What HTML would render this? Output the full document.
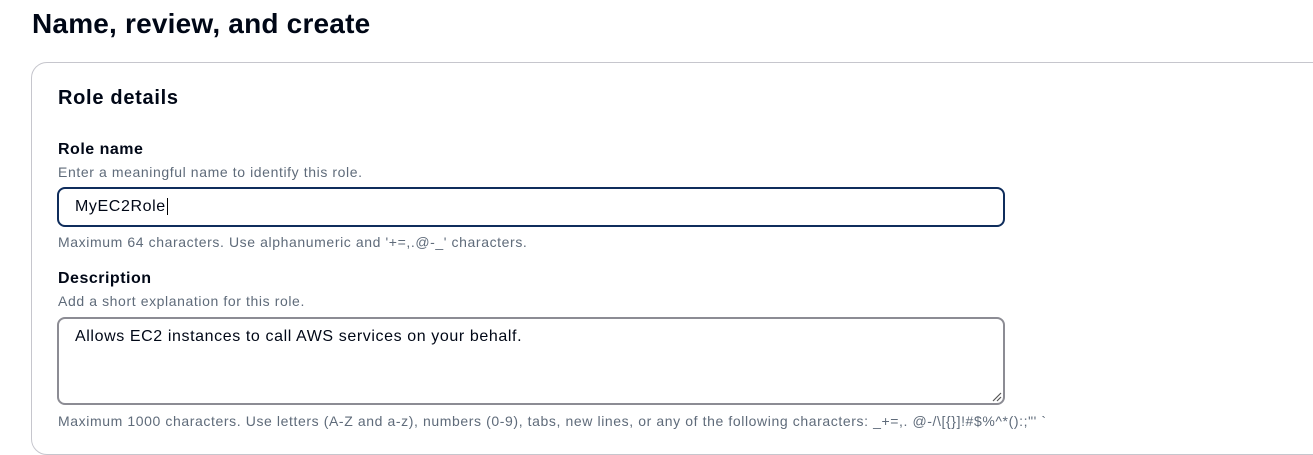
<!DOCTYPE html>
<html><head><style>
body{margin:0;background:#fff;font-family:"Liberation Sans",Arial,sans-serif;color:#000716;width:1313px;height:455px;overflow:hidden;position:relative}
.a{position:absolute;white-space:nowrap}
h1{position:absolute;left:32px;top:8px;margin:0;font-size:28px;font-weight:bold;letter-spacing:0.2px}
.card{position:absolute;left:31px;top:62px;width:1320px;height:391px;border:1px solid #c6c6cd;border-radius:16px}
.lbl{font-size:16px;font-weight:bold;letter-spacing:0.5px}
.hint{font-size:14px;color:#5f6b7a;letter-spacing:0.6px}
.inp{position:absolute;left:57px;border-radius:8px;box-sizing:border-box;font-size:16px;padding-left:16px;letter-spacing:0.6px}
</style></head><body>
<h1>Name, review, and create</h1>
<div class="card"></div>
<div class="a" style="left:58px;top:87px;font-size:20px;font-weight:bold;letter-spacing:0.7px">Role details</div>
<div class="a lbl" style="left:58px;top:141px">Role name</div>
<div class="a hint" style="left:58px;top:164px">Enter a meaningful name to identify this role.</div>
<div class="inp" style="top:187px;width:948px;height:40px;border:2px solid #0f2d5c;line-height:36px">MyEC2Role<span style="border-left:1px solid #000;margin-left:1px"></span></div>
<div class="a hint" style="left:58px;top:234px">Maximum 64 characters. Use alphanumeric and '+=,.@-_' characters.</div>
<div class="a lbl" style="left:58px;top:270px">Description</div>
<div class="a hint" style="left:58px;top:293px">Add a short explanation for this role.</div>
<div class="inp" style="top:317px;width:948px;height:88px;border:2px solid #8c8c94;padding-top:9px">Allows EC2 instances to call AWS services on your behalf.</div>
<svg class="a" style="left:992px;top:392px" width="10" height="10"><path d="M1 9L9 1M5 9L9 5" stroke="#555" stroke-width="1.2"/></svg>
<div class="a hint" style="left:58px;top:413px">Maximum 1000 characters. Use letters (A-Z and a-z), numbers (0-9), tabs, new lines, or any of the following characters: _+=,. @-/\[{}]!#$%^*():;"' `</div>
</body></html>
